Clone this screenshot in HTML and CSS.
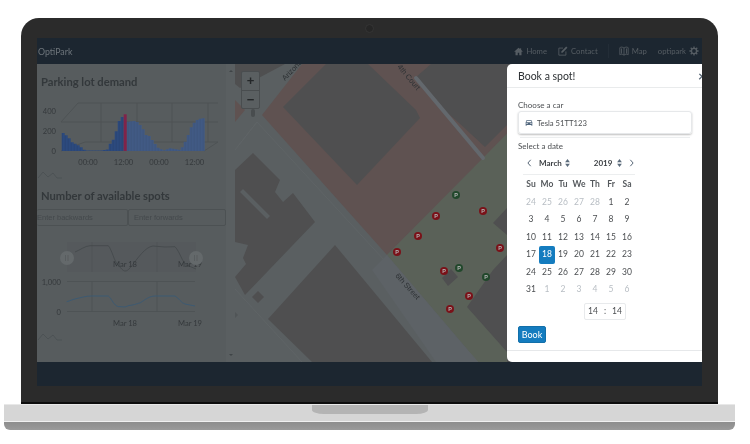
FILE: index.html
```html
<!DOCTYPE html>
<html lang="en">
<head>
    <meta charset="UTF-8">
    <meta name="viewport" content="width=device-width, initial-scale=1.0">
    <title>OptiPark</title>
    <link rel="stylesheet" href="styles.css">
</head>
<body>
    <div class="laptop">
        <div class="lid">
            <span class="camera"></span>
            <div class="screen">
                <nav class="navbar">
                    <span class="brand">OptiPark</span>
                    <div class="nav-links">
                        <a class="nav-item">
                            <svg class="nav-icon nav-icon-home" viewBox="0 0 12 12"><path d="M6 1 0.5 6l.7.8L2 6.100V11h3V7.600h2V11h3V6.100l.8.7.7-.8L9.500 3.800V1.500H8.200v1.100z"/></svg>
                            Home
                        </a>
                        <a class="nav-item nav-contact">
                            <svg class="nav-icon" viewBox="0 0 12 12"><path class="icon-line" d="M9.500 6.500V11H1V2.500h5"/><path d="M4 6.500 9.800 .7 11.300 2.200 5.500 8H4z"/></svg>
                            Contact
                        </a>
                        <span class="nav-sep"></span>
                        <a class="nav-item nav-map">
                            <svg class="nav-icon" viewBox="0 0 12 12"><path class="icon-line" d="M1 2c1.500-1 3-1 5 .5C8 1 9.500 1 11 2v8.500c-1.500-1-3-1-5 .5-2-1.500-3.500-1.500-5-.5zM3 3v6M9 3v6M6 2.500V11"/></svg>
                            Map
                        </a>
                        <a class="nav-item nav-user">
                            optipark
                            <svg class="nav-icon" viewBox="0 0 12 12"><circle class="icon-line icon-thick" cx="6" cy="6" r="3.100"/><path class="icon-line icon-thick" d="M6 .5v2M6 9.500v2M.5 6h2M9.500 6h2M2.100 2.100l1.400 1.400M8.500 8.500l1.400 1.400M9.900 2.100 8.500 3.500M3.500 8.500 2.100 9.900"/></svg>
                        </a>
                    </div>
                </nav>

                <div class="main">
                    <aside class="sidebar">
                        <div class="side-content">
                            <h3 class="side-title">Parking lot demand</h3>
                            <svg class="chart chart-demand" viewBox="37 92 189 94">
                                <defs>
                                    <pattern id="barsDark" x="61.700" y="0" width="3" height="10" patternUnits="userSpaceOnUse">
                                        <rect width="3" height="10" fill="#2c4a7e"/><rect width=".5" height="10" fill="#253e69"/>
                                    </pattern>
                                    <pattern id="barsLight" x="61.700" y="0" width="3" height="10" patternUnits="userSpaceOnUse">
                                        <rect width="3" height="10" fill="#415a84"/><rect width=".5" height="10" fill="#3a5076"/>
                                    </pattern>
                                </defs>
                                <path class="grid" d="M78 103H218M61 122 78 103M61 122H218M61 151 85 142H218M204 151 218 142M101 103V142M137 103V142M172 103V142M208 103V142"/>
                                <path fill="url(#barsDark)" d="M61.700 151V133H64.700V135.300H67.700V138.300H70.700V142.300H73.700V143.700H76.700V145.300H79.700V147.300H82.700V149.700H85.700V150.600H102.700V150H105.700V149.500H108.700V143.700H111.700V139.700H114.700V131.300H117.700V121H120.700V117H123.700V151Z"/>
                                <path fill="url(#barsLight)" d="M126.700 151V121.700H129.700V121.300H132.700V121H135.700V122H138.700V125H141.700V129.300H144.700V135H147.700V136H150.700V140H153.700V144H156.700V147.700H159.700V149.300H162.700V150.300H165.700V149.300H168.700V148.300H171.700V148.700H174.700V149.300H177.700V149.700H180.700V147.300H183.700V141.700H186.700V135H189.700V127.300H192.700V122.700H195.700V120H198.700V118.700H201.700V118.300H204.700V151Z"/>
                                <rect x="123.700" y="114.300" width="3" height="36.700" fill="#80234a"/>
                                <text class="axis" x="56" y="114" text-anchor="end">400</text>
                                <text class="axis" x="56" y="134" text-anchor="end">200</text>
                                <text class="axis" x="56" y="153.500" text-anchor="end">0</text>
                                <text class="axis" x="88" y="165" text-anchor="middle">00:00</text>
                                <text class="axis" x="123.500" y="165" text-anchor="middle">12:00</text>
                                <text class="axis" x="159" y="165" text-anchor="middle">00:00</text>
                                <text class="axis" x="194.500" y="165" text-anchor="middle">12:00</text>
                                <path class="spark" d="M38 178 43 172 48 177 53 173 57 178H62"/>
                            </svg>

                            <h3 class="side-title">Number of available spots</h3>
                            <div class="range-row">
                                <input class="range-input range-back" placeholder="Enter backwards">
                                <input class="range-input" placeholder="Enter forwards">
                            </div>
                            <svg class="chart chart-spots" viewBox="37 226 189 116">
                                <rect x="67" y="242" width="129" height="30" fill="#55595c"/>
                                <path class="grid grid-soft" d="M92 242V272M157 242V272"/>
                                <path class="nav-line" d="M75 252C80 250 85 246 90 245.700H108.300C112 250 114 261 118 265C121 268 123 271 125 271C127 271 128 270 130 268C138 258 145 247 153 246L165 247 175 246.700C180 252 182 262 186.700 265L196 269"/>
                                <text class="axis" x="125" y="267" text-anchor="middle">Mar 18</text>
                                <text class="axis" x="190" y="267" text-anchor="middle">Mar 19</text>
                                <circle class="handle" cx="67" cy="258" r="7"/>
                                <circle class="handle" cx="196" cy="258" r="7"/>
                                <path class="grid grid-pipe" d="M65.500 255v6M68 255v6M194.500 255v6M197 255v6"/>
                                <path class="grid" d="M67 281.500H195M67 311.500H195M92 281.500V311.500M157 281.500V311.500"/>
                                <path class="spots-line" d="M66.700 301.700C70 301 72 299.500 75 299C81 297.500 86 296 91.700 296H108.300C112 299 114 306 118.300 306.500L125 307 129 305.500C135 305 138 303 140 303C145 299.500 150 296 155 296H175C179 298 181 303 185 304L195 306"/>
                                <text class="axis" x="61" y="285" text-anchor="end">1,000</text>
                                <text class="axis" x="61" y="315" text-anchor="end">0</text>
                                <text class="axis" x="125" y="326" text-anchor="middle">Mar 18</text>
                                <text class="axis" x="190" y="326" text-anchor="middle">Mar 19</text>
                                <path class="spark" d="M38 340 43 334 48 339 53 335 57 340H62"/>
                            </svg>
                        </div>
                        <div class="scroll-track">
                            <span class="arrow-up"></span>
                            <span class="arrow-down"></span>
                        </div>
                    </aside>

                    <div class="map">
                        <svg class="map-svg" viewBox="235 64 467 298">
                            <rect x="235" y="64" width="467" height="298" fill="#5a5f61"/>
                            <!-- lots -->
                            <path fill="#5f5251" d="M302 64 262 115 387 255 483 160 530 110V64Z"/>
                            <path fill="#5f5251" d="M235 100 245 110 235 122Z"/>
                            <path fill="#5a6158" d="M387 255 483 158 530 110V362H478Z"/>
                            <!-- buildings -->
                            <path class="bld" d="M235 64H285L240 88 235 84Z"/>
                            <path class="bld" d="M283 107 326 64H368L416 110 420 118 357 185Z"/>
                            <path class="bld" d="M415 78 431 64H530V125H507L485 147 458 122 443 109Z"/>
                            <path class="bld" d="M467 307 493 270 507 255H530V362H507V352Z"/>
                            <path class="bld" d="M493 223 507 208H530V235H507Z"/>
                            <path class="bld" d="M442 278 451 269 458 277 448 286Z"/>
                            <path class="bld" d="M235 170 253 153 280 180 275 192 283 202 293 193 315 222 245 295 235 277 246 264 243 258 248 245 235 242Z"/>
                            <path class="bld" d="M268 319 335 245 432 362H312Z"/>
                            <path class="bld" d="M258 291 264 297 258 303 252 297Z"/>
                            <path fill="#5a5f61" d="M240 192 243 189 270 216 267 219Z"/>
                            <!-- roads -->
                            <path class="road-edge" d="M235 289 302 362M238 146 257 122 478 362M235 150 257 122"/>
                            <path fill="#5d6266" d="M387 255 478 362H436L372 270Z"/>
                            <path class="court" d="M416 78 483 158"/>
                            <text class="map-label" transform="translate(285 81) rotate(-46)">Arizona</text>
                            <text class="map-label" transform="translate(397 67) rotate(50)">4th Court</text>
                            <text class="map-label" transform="translate(395 276) rotate(48)">6th Street</text>
                            <!-- parking spots -->
                            <g class="spot spot-free"><circle cx="456" cy="195" r="4"/><text x="456" y="197">P</text></g>
                            <g class="spot"><circle cx="483" cy="211" r="4"/><text x="483" y="213">P</text></g>
                            <g class="spot"><circle cx="436" cy="216" r="4"/><text x="436" y="218">P</text></g>
                            <g class="spot"><circle cx="418" cy="236" r="4"/><text x="418" y="238">P</text></g>
                            <g class="spot"><circle cx="397" cy="252" r="4"/><text x="397" y="254">P</text></g>
                            <g class="spot"><circle cx="500" cy="248" r="4"/><text x="500" y="250">P</text></g>
                            <g class="spot"><circle cx="444" cy="271" r="4"/><text x="444" y="273">P</text></g>
                            <g class="spot spot-free"><circle cx="459" cy="268" r="4"/><text x="459" y="270">P</text></g>
                            <g class="spot spot-free"><circle cx="486" cy="277" r="4"/><text x="486" y="279">P</text></g>
                            <g class="spot"><circle cx="469" cy="296" r="4"/><text x="469" y="298">P</text></g>
                            <g class="spot"><circle cx="450" cy="309" r="4"/><text x="450" y="311">P</text></g>
                        </svg>
                        <div class="zoom-control">
                            <span class="zoom-btn">+</span>
                            <span class="zoom-btn">&minus;</span>
                        </div>
                        <span class="zoom-pin"></span>
                        <span class="map-arrow"></span>
                    </div>

                    <section class="modal">
                        <header class="modal-head">
                            <span class="modal-title">Book a spot!</span>
                            <span class="modal-close">&times;</span>
                        </header>
                        <div class="modal-body">
                            <label class="field-label">Choose a car</label>
                            <div class="car-select">
                                <svg class="car-icon" viewBox="0 0 12 10"><path d="M2.500 .5h7L11 4v5H9.500V8h-7v1H1V4zM3 1.500 2.200 4h7.600L9 1.500zM2.300 5v1.400h1.500V5zM8.200 5v1.400h1.500V5z" fill-rule="evenodd"/></svg>
                                Tesla 51TT123
                            </div>
                            <div class="field-rule"></div>
                            <label class="field-label">Select a date</label>
                            <div class="calendar">
                                <div class="cal-head">
                                    <svg class="cal-nav" viewBox="0 0 6 10"><path d="M4.500 1 1 5l3.500 4"/></svg>
                                    <span class="cal-month">March</span>
                                    <svg class="cal-sort" viewBox="0 0 6 10"><path d="M3 0 6 4H0zM3 10 0 6H6z"/></svg>
                                    <span class="cal-year">2019</span>
                                    <svg class="cal-sort" viewBox="0 0 6 10"><path d="M3 0 6 4H0zM3 10 0 6H6z"/></svg>
                                    <svg class="cal-nav cal-next" viewBox="0 0 6 10"><path d="M1.500 1 5 5 1.500 9"/></svg>
                                </div>
                                <div class="cal-grid">
                                    <span class="dow">Su</span><span class="dow">Mo</span><span class="dow">Tu</span><span class="dow">We</span><span class="dow">Th</span><span class="dow">Fr</span><span class="dow">Sa</span>
                                    <span class="muted">24</span><span class="muted">25</span><span class="muted">26</span><span class="muted">27</span><span class="muted">28</span><span>1</span><span>2</span>
                                    <span>3</span><span>4</span><span>5</span><span>6</span><span>7</span><span>8</span><span>9</span>
                                    <span>10</span><span>11</span><span>12</span><span>13</span><span>14</span><span>15</span><span>16</span>
                                    <span>17</span><span class="selected">18</span><span>19</span><span>20</span><span>21</span><span>22</span><span>23</span>
                                    <span>24</span><span>25</span><span>26</span><span>27</span><span>28</span><span>29</span><span>30</span>
                                    <span>31</span><span class="muted">1</span><span class="muted">2</span><span class="muted">3</span><span class="muted">4</span><span class="muted">5</span><span class="muted">6</span>
                                </div>
                                <div class="time-box"><span>14</span><span>:</span><span>14</span></div>
                            </div>
                            <button class="book-btn">Book</button>
                        </div>
                        <div class="modal-foot"></div>
                    </section>
                </div>

                <div class="footer-bar"></div>
            </div>
        </div>
        <div class="base">
            <span class="base-notch"></span>
        </div>
        <div class="base-lip"></div>
    </div>
</body>
</html>
```

FILE: styles.css
```css
:root {
    --nav-bg: #1c2630;
    --side-bg: #575c5e;
    --side-text: #33383b;
    --nav-text: #565d63;
    --blue: #147cbf;
    --modal-text: #4c4f52;
}

body {
    margin: 0;
    background-color: #fff;
    font-family: Lato, "Liberation Sans", sans-serif;
    overflow: hidden;
}
.laptop {
    width: 739px;
    padding-top: 18px;
    display: flex;
    flex-direction: column;
    align-items: center;
    filter: blur(0.35px);
}

/* lid */
.lid {
    width: 697px;
    height: 386px;
    box-sizing: border-box;
    padding: 20px 16px 18px;
    background-color: #2b2b2b;
    border-radius: 18px 18px 0 0;
    border-bottom: 2px solid #0d0d0d;
    position: relative;
}
.camera {
    position: absolute;
    left: 344px;
    top: 6px;
    width: 7px;
    height: 7px;
    border-radius: 50%;
    background-color: #262626;
    border: 1px solid #353535;
}
.screen {
    height: 348px;
    display: flex;
    flex-direction: column;
}

/* navbar */
.navbar {
    height: 26px;
    flex: none;
    display: flex;
    justify-content: space-between;
    align-items: center;
    background-color: var(--nav-bg);
    color: var(--nav-text);
    font-size: 7.700px;
}
.brand {
    margin-left: 1px;
    font-size: 8.800px;
    color: #6e757b;
}
.nav-links {
    display: flex;
    align-items: center;
    margin-right: 3px;
}
.nav-item {
    display: flex;
    align-items: center;
    gap: 3px;
}
.nav-contact {
    margin-left: 11px;
}
.nav-sep {
    width: 1px;
    height: 14px;
    margin: 0 10px;
    background-color: #232d37;
}
.nav-user {
    margin-left: 11px;
}
.nav-icon {
    width: 10px;
    height: 10px;
    fill: var(--nav-text);
}
.nav-icon-home {
    width: 9px;
    height: 9px;
}
.icon-line {
    fill: none;
    stroke: var(--nav-text);
    stroke-width: 1;
}
.icon-thick {
    stroke-width: 1.600;
}

/* main area */
.main {
    flex: 1;
    display: flex;
    position: relative;
    min-height: 0;
}
.sidebar {
    width: 198px;
    flex: none;
    display: flex;
    background-color: var(--side-bg);
}
.side-content {
    width: 189px;
}
.side-title {
    margin: 0 0 0 4px;
    height: 20px;
    font-size: 11.200px;
    line-height: 20px;
    font-weight: 700;
    color: var(--side-text);
    white-space: nowrap;
}
.side-content > .side-title:first-child {
    margin-top: 8px;
}
.chart {
    display: block;
    width: 189px;
}
.chart-demand {
    height: 94px;
}
.chart-spots {
    height: 116px;
}
.grid {
    fill: none;
    stroke: #4e5355;
    stroke-width: 1;
}
.grid-soft {
    stroke: #505557;
}
.grid-pipe {
    stroke: #585d5f;
}
.axis {
    font-family: Lato, "Liberation Sans", sans-serif;
    font-size: 7.600px;
    fill: #35393c;
}
.spark {
    fill: none;
    stroke: #484d50;
    stroke-width: .7;
}
.nav-line {
    fill: none;
    stroke: #42474a;
    stroke-width: .8;
}
.spots-line {
    fill: none;
    stroke: #3d5a72;
    stroke-width: 1;
}
.handle {
    fill: #64696b;
}
.range-row {
    display: flex;
    margin-top: 3px;
}
.range-input {
    height: 17px;
    box-sizing: border-box;
    width: 98px;
    padding: 0 0 0 5px;
    background: transparent;
    border: 1px solid #4c5153;
    border-radius: 2px;
    font-family: "Liberation Sans", sans-serif;
    font-size: 7.500px;
}
.range-input::placeholder {
    color: #44494c;
}
.range-back {
    width: 91px;
    padding-left: 0;
    border-left: none;
}
.scroll-track {
    width: 9px;
    display: flex;
    flex-direction: column;
    justify-content: space-between;
    align-items: center;
    padding: 4px 0;
    box-sizing: border-box;
    background-color: #5a5f61;
}
.arrow-up {
    border: 2px solid transparent;
    border-bottom: 2px solid #3f4447;
}
.arrow-down {
    border: 2px solid transparent;
    border-top: 2px solid #3f4447;
}

/* map */
.map {
    flex: 1;
    min-width: 0;
    position: relative;
    overflow: hidden;
}
.map-svg {
    display: block;
    width: 467px;
    height: 298px;
}
.bld {
    fill: #4f4f50;
}
.road-edge {
    fill: none;
    stroke: #5f6466;
    stroke-width: 1;
}
.court {
    fill: none;
    stroke: #63686d;
    stroke-width: 4;
    stroke-linecap: round;
}
.map-label {
    font-family: "Liberation Sans", sans-serif;
    font-size: 7.500px;
    fill: #2d3134;
}
.spot circle {
    fill: #7a1219;
}
.spot text {
    font-family: "Liberation Sans", sans-serif;
    font-size: 5.500px;
    font-weight: 700;
    fill: #b5b5b5;
    text-anchor: middle;
}
.spot-free circle {
    fill: #22482c;
}
.zoom-control {
    position: absolute;
    left: 6px;
    top: 7px;
    width: 17px;
    display: flex;
    flex-direction: column;
    background-color: #5a5f61;
    border: 1px solid #494d4f;
    border-radius: 2px;
}
.zoom-btn {
    height: 17.500px;
    display: flex;
    align-items: center;
    justify-content: center;
    font-family: "Liberation Sans", sans-serif;
    font-size: 13px;
    font-weight: 700;
    color: #242729;
}
.zoom-btn + .zoom-btn {
    border-top: 1px solid #494d4f;
}
.zoom-pin {
    position: absolute;
    left: 16px;
    top: 45px;
    width: 4px;
    height: 8px;
    border-radius: 2px;
    background-color: #494d4f;
}
.map-arrow {
    position: absolute;
    left: 0;
    top: 248px;
    border: 3px solid transparent;
    border-left: 3px solid #505557;
}

/* booking modal */
.modal {
    position: absolute;
    left: 470px;
    top: 0;
    right: 0;
    bottom: 0;
    display: flex;
    flex-direction: column;
    background-color: #fff;
    border-radius: 5px 0 0 5px;
    color: var(--modal-text);
    overflow: hidden;
}
.modal-head {
    height: 23px;
    flex: none;
    display: flex;
    justify-content: space-between;
    align-items: center;
    padding-left: 11px;
    border-bottom: 1px solid #e9ebec;
}
.modal-title {
    font-size: 10.500px;
    color: #2c3033;
}
.modal-close {
    margin-right: -4px;
    font-size: 14px;
    font-weight: 700;
    color: #5c6a78;
}
.modal-body {
    flex: 1;
    padding: 12px 10px 0 11px;
}
.field-label {
    display: block;
    height: 11px;
    font-size: 8px;
    line-height: 11px;
}
.car-select {
    height: 23px;
    box-sizing: border-box;
    display: flex;
    align-items: center;
    gap: 4px;
    padding-left: 6px;
    border: 1px solid #e6e8ea;
    border-radius: 3px;
    box-shadow: 0 1px 2px rgba(0, 0, 0, 0.25);
    font-size: 7.700px;
}
.car-icon {
    width: 8px;
    height: 8px;
    fill: #53687f;
}
.field-rule {
    height: 1px;
    margin: 3px 2px 3px;
    background-color: #eceeef;
}
.calendar {
    width: 112px;
    margin-left: 5px;
    display: flex;
    flex-direction: column;
}
.cal-head {
    height: 22px;
    display: flex;
    align-items: center;
    padding-left: 4px;
    border-bottom: 1px solid #eceeef;
    font-size: 8px;
    font-weight: 700;
    color: #3a3e42;
}
.cal-nav {
    width: 5px;
    height: 8px;
    fill: none;
    stroke: #4f5f70;
    stroke-width: 1.200;
}
.cal-next {
    margin-left: 7px;
}
.cal-month {
    margin-left: 7px;
}
.cal-year {
    margin-left: 24px;
}
.cal-sort {
    width: 5px;
    height: 8px;
    margin-left: 3px;
    fill: #5b6b7b;
}
.cal-year + .cal-sort {
    margin-left: 5px;
}
.cal-grid {
    display: grid;
    grid-template-columns: repeat(7, 16px);
    grid-auto-rows: 17.500px;
    margin-top: 1px;
    font-size: 8.500px;
    text-align: center;
    line-height: 17.500px;
}
.dow {
    font-weight: 700;
    color: #55595d;
}
.muted {
    color: #b8bec4;
}
.selected {
    background-color: var(--blue);
    border-radius: 2px;
    color: #fff;
}
.time-box {
    align-self: flex-end;
    width: 42px;
    height: 17px;
    margin: 4px 9px 0 0;
    box-sizing: border-box;
    display: flex;
    justify-content: space-around;
    align-items: center;
    border: 1px solid #e8eaec;
    border-radius: 2px;
    font-size: 8.500px;
}
.book-btn {
    display: block;
    width: 28px;
    height: 17px;
    margin-top: 6px;
    padding: 0;
    border: 1px solid #126fa9;
    border-radius: 2px;
    background-color: var(--blue);
    color: #fff;
    font-family: Lato, "Liberation Sans", sans-serif;
    font-size: 9px;
}
.modal-foot {
    height: 11px;
    flex: none;
    border-top: 1px solid #e6e8ea;
}
.footer-bar {
    height: 24px;
    flex: none;
    background-color: var(--nav-bg);
}

/* base */
.base {
    width: 731px;
    height: 18px;
    display: flex;
    justify-content: center;
    background-color: #d6d6d6;
    border-top: 1px solid #e8e8e8;
    border-bottom: 1px solid #f0f0f0;
    box-sizing: border-box;
}
.base-notch {
    width: 116px;
    height: 9px;
    background-color: #b4b4b4;
    border-radius: 0 0 12px 12px / 0 0 4px 4px;
}
.base-lip {
    width: 731px;
    height: 8px;
    background: linear-gradient(#8d8d8d, #9a9a9a);
    border-radius: 0 0 6px 6px;
}
```
